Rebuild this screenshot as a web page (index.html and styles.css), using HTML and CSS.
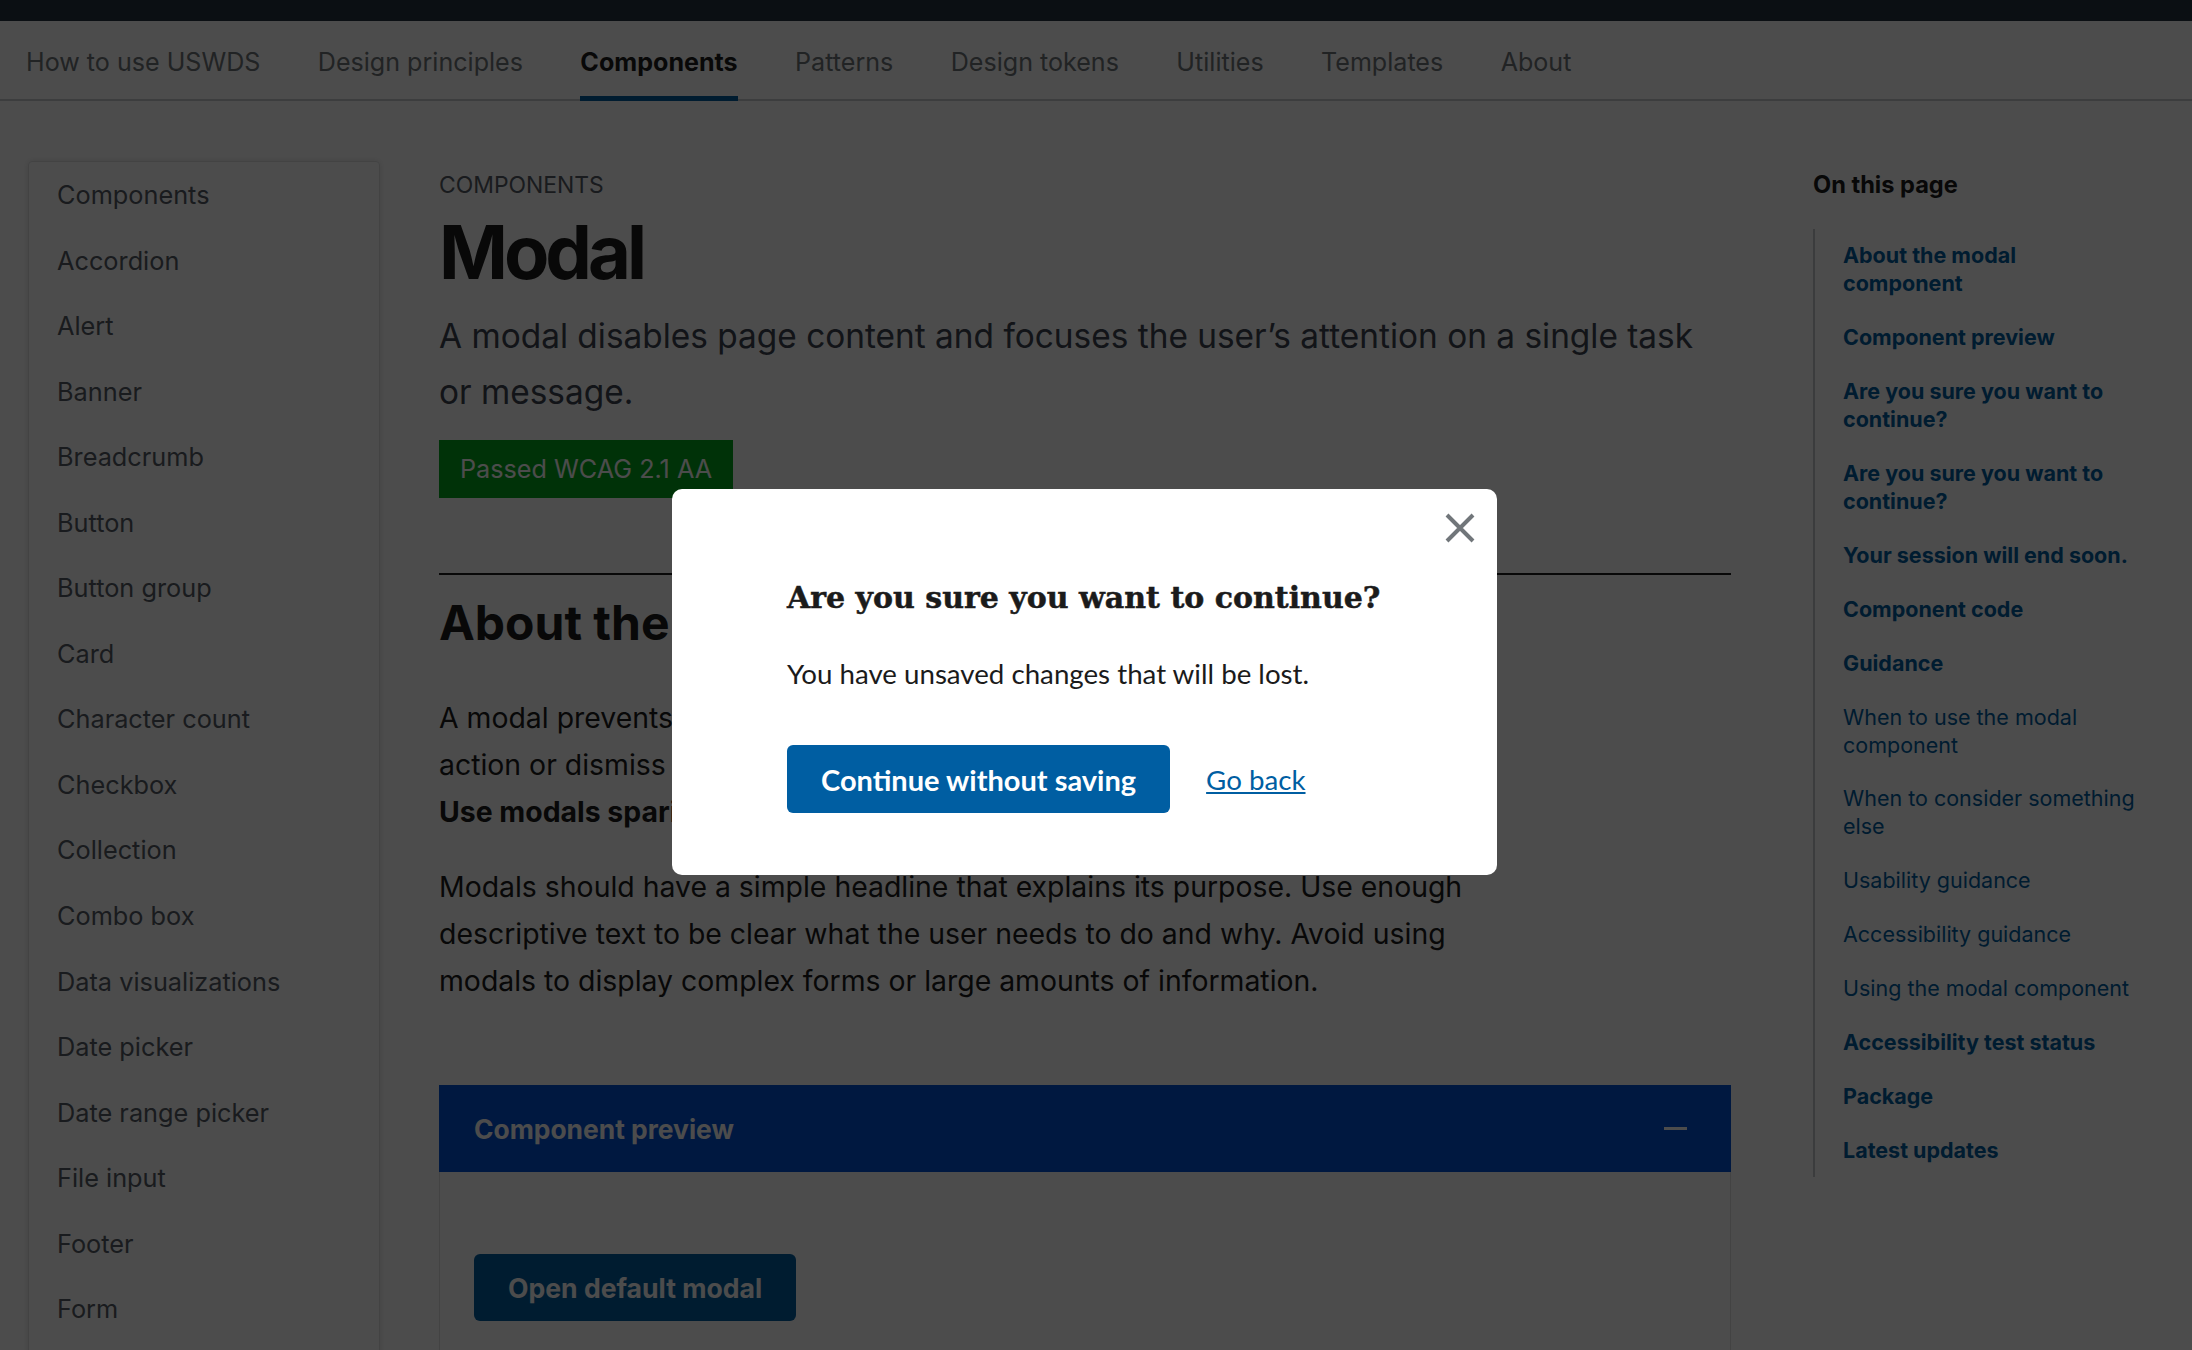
FILE: index.html
```html
<!DOCTYPE html>
<html lang="en">
<head>
  <meta charset="UTF-8">
  <title>Modal | U.S. Web Design System (USWDS)</title>
  <link rel="stylesheet" href="styles.css">
</head>
<body>
  <div class="top-bar"></div>

  <!-- Main navigation -->
  <nav class="primary-nav">
    <a href="#">How to use USWDS</a>
    <a href="#">Design principles</a>
    <a href="#" class="current">Components</a>
    <a href="#">Patterns</a>
    <a href="#">Design tokens</a>
    <a href="#">Utilities</a>
    <a href="#">Templates</a>
    <a href="#">About</a>
  </nav>

  <div class="page">
    <!-- Side navigation -->
    <aside class="sidenav">
      <ul>
        <li><a href="#">Components</a></li>
        <li><a href="#">Accordion</a></li>
        <li><a href="#">Alert</a></li>
        <li><a href="#">Banner</a></li>
        <li><a href="#">Breadcrumb</a></li>
        <li><a href="#">Button</a></li>
        <li><a href="#">Button group</a></li>
        <li><a href="#">Card</a></li>
        <li><a href="#">Character count</a></li>
        <li><a href="#">Checkbox</a></li>
        <li><a href="#">Collection</a></li>
        <li><a href="#">Combo box</a></li>
        <li><a href="#">Data visualizations</a></li>
        <li><a href="#">Date picker</a></li>
        <li><a href="#">Date range picker</a></li>
        <li><a href="#">File input</a></li>
        <li><a href="#">Footer</a></li>
        <li><a href="#">Form</a></li>
        <li><a href="#">Grid</a></li>
      </ul>
    </aside>

    <main class="content">
      <p class="eyebrow">Components</p>
      <h1>Modal</h1>
      <p class="lead">A modal disables page content and focuses the user’s attention on a single task or message.</p>
      <span class="tag-passed">Passed WCAG 2.1 AA</span>
      <hr>
      <h2>About the modal component</h2>
      <p class="text">A modal prevents users from using the page until they complete an<br>action or dismiss the modal. It keeps attention on one task.<br><strong>Use modals sparingly.</strong></p>
      <p class="text">Modals should have a simple headline that explains its purpose. Use enough descriptive text to be clear what the user needs to do and why. Avoid using modals to display complex forms or large amounts of information.</p>

      <div class="accordion">
        <button class="accordion-header">
          <span>Component preview</span>
          <span class="minus"></span>
        </button>
        <div class="accordion-body">
          <button class="btn">Open default modal</button>
        </div>
      </div>
    </main>

    <!-- On this page -->
    <aside class="toc">
      <h4>On this page</h4>
      <ul>
        <li class="main"><a href="#">About the modal component</a></li>
        <li class="main"><a href="#">Component preview</a></li>
        <li class="main"><a href="#">Are you sure you want to continue?</a></li>
        <li class="main"><a href="#">Are you sure you want to continue?</a></li>
        <li class="main"><a href="#">Your session will end soon.</a></li>
        <li class="main"><a href="#">Component code</a></li>
        <li class="main"><a href="#">Guidance</a></li>
        <li><a href="#">When to use the modal component</a></li>
        <li><a href="#">When to consider something else</a></li>
        <li><a href="#">Usability guidance</a></li>
        <li><a href="#">Accessibility guidance</a></li>
        <li><a href="#">Using the modal component</a></li>
        <li class="main"><a href="#">Accessibility test status</a></li>
        <li class="main"><a href="#">Package</a></li>
        <li class="main"><a href="#">Latest updates</a></li>
      </ul>
    </aside>
  </div>

  <!-- Open modal with dimmed page behind -->
  <div class="overlay">
    <div class="modal" role="dialog">
      <button class="modal-close" aria-label="Close this window">
        <svg width="32" height="32" viewBox="0 0 32 32">
          <path d="M3 3 L29 29 M29 3 L3 29" stroke="#71767a" stroke-width="4" fill="none"/>
        </svg>
      </button>
      <h2 class="modal-heading">Are you sure you want to continue?</h2>
      <p class="modal-text">You have unsaved changes that will be lost.</p>
      <div class="modal-actions">
        <button class="btn btn-modal">Continue without saving</button>
        <a href="#" class="go-back">Go back</a>
      </div>
    </div>
  </div>
</body>
</html>
```

FILE: styles.css
```css
* {
  box-sizing: border-box;
}
html, body {
  margin: 0;
}
body {
  font-family: 'Inter', 'Noto Sans', sans-serif;
  color: #1b1b1b;
  background-color: #fff;
  height: 1350px;
  overflow: hidden;
}

/* Top navigation */
.top-bar {
  height: 21px;
  background-color: #253240;
}
.primary-nav {
  display: flex;
  gap: 57.4px;
  height: 80px;
  padding-left: 26px;
  border-bottom: 2px solid #c9cccf;
}
.primary-nav a {
  position: relative;
  display: flex;
  align-items: center;
  padding-top: 4px;
  font-size: 25.1px;
  color: #71767a;
  text-decoration: none;
}
.primary-nav a.current {
  color: #1b1b1b;
  font-weight: 700;
}
.primary-nav a.current::after {
  content: "";
  position: absolute;
  left: 0;
  right: 0;
  bottom: -2px;
  height: 5px;
  background-color: #005ea2;
}

.page {
  display: flex;
  align-items: flex-start;
  padding: 60px 28px 0;
}

/* Side navigation */
.sidenav {
  width: 352px;
  flex: none;
  border: 1px solid #dfe1e2;
  border-radius: 4px;
  box-shadow: 0 0 6px rgba(0, 0, 0, 0.12);
}
.sidenav ul {
  list-style: none;
  margin: 0;
  padding: 0;
}
.sidenav a {
  display: block;
  padding: 17px 0 16px 28px;
  font-size: 25.3px;
  line-height: 32.55px;
  color: #565c65;
  text-decoration: none;
}

/* Main column */
.content {
  width: 1292px;
  flex: none;
  margin-left: 59px;
}
.eyebrow {
  margin: 10px 0 0;
  font-size: 22.9px;
  line-height: 28px;
  text-transform: uppercase;
  color: #565c65;
}
h1 {
  margin: 13px 0 0;
  font-size: 74px;
  line-height: 1.1;
  font-weight: 700;
  letter-spacing: -4px;
}
.lead {
  margin: 15px 0 0;
  font-size: 33.4px;
  line-height: 56px;
  color: #3d4551;
}
.tag-passed {
  display: block;
  width: fit-content;
  margin-top: 20px;
  padding: 0 21px;
  height: 58px;
  line-height: 58px;
  font-size: 25.2px;
  color: #fff;
  background-color: #00a91c;
}
hr {
  margin: 74.5px 0 0;
  border: none;
  border-top: 2px solid #1b1b1b;
}
.content h2 {
  margin: 19px 0 0;
  font-size: 48px;
  line-height: 1.2;
  font-weight: 700;
}
.text {
  margin: 42.5px 0 0;
  max-width: 1040px;
  font-size: 28.4px;
  line-height: 47px;
}
.text + .text {
  margin-top: 28.5px;
}

/* Accordion with preview */
.accordion {
  margin-top: 81px;
}
.accordion-header {
  display: flex;
  align-items: center;
  justify-content: space-between;
  width: 100%;
  height: 87px;
  padding: 0 44px 0 35px;
  border: none;
  background-color: #0050d8;
  color: #fff;
  font-family: inherit;
  font-size: 26.4px;
  font-weight: 700;
  text-align: left;
}
.minus {
  width: 23px;
  height: 3px;
  background-color: #fff;
}
.accordion-body {
  border: 1px solid #dfe1e2;
  border-top: none;
  padding: 82px 34px 120px;
}
.btn {
  height: 67px;
  padding: 0 34px;
  border: none;
  border-radius: 6px;
  background-color: #005ea2;
  color: #fff;
  font-family: inherit;
  font-size: 26.6px;
  font-weight: 700;
}

/* On this page */
.toc {
  width: 350px;
  flex: none;
  margin-left: 82px;
}
.toc h4 {
  margin: 10px 0 0;
  font-size: 23.6px;
  line-height: 28px;
  font-weight: 700;
}
.toc ul {
  list-style: none;
  margin: 29.5px 0 0;
  padding: 0;
  border-left: 2px solid #c6cace;
}
.toc li {
  padding: 12.95px 0 12.95px 28px;
  max-width: 323px;
  font-size: 21.5px;
  line-height: 28px;
}
.toc li.main {
  font-weight: 700;
}
.toc a {
  color: #005ea2;
  text-decoration: none;
}

/* Modal */
.overlay {
  position: fixed;
  inset: 0;
  display: flex;
  align-items: center;
  justify-content: center;
  padding: 14px 23px 0 0;
  background-color: rgba(0, 0, 0, 0.7);
}
.modal {
  position: relative;
  width: 825px;
  padding: 89px 115px 61.5px;
  border-radius: 10px;
  background-color: #fff;
}
.modal-close {
  position: absolute;
  top: 23px;
  right: 21px;
  padding: 0;
  border: none;
  background: none;
  line-height: 0;
}
.modal-heading {
  margin: 0;
  font-family: 'DejaVu Serif', serif;
  font-size: 30px;
  line-height: 1.3;
  font-weight: 700;
  -webkit-text-stroke: 0.5px #1b1b1b;
}
.modal-text {
  margin: 38px 0 0;
  font-family: 'Lato', sans-serif;
  font-size: 27.7px;
  line-height: 1.4;
}
.modal-actions {
  display: flex;
  align-items: center;
  gap: 36px;
  margin-top: 51px;
}
.btn-modal {
  height: 68px;
  font-family: 'Lato', sans-serif;
  font-size: 29px;
}
.go-back {
  font-family: 'Lato', sans-serif;
  font-size: 27.7px;
  color: #005ea2;
}
```
